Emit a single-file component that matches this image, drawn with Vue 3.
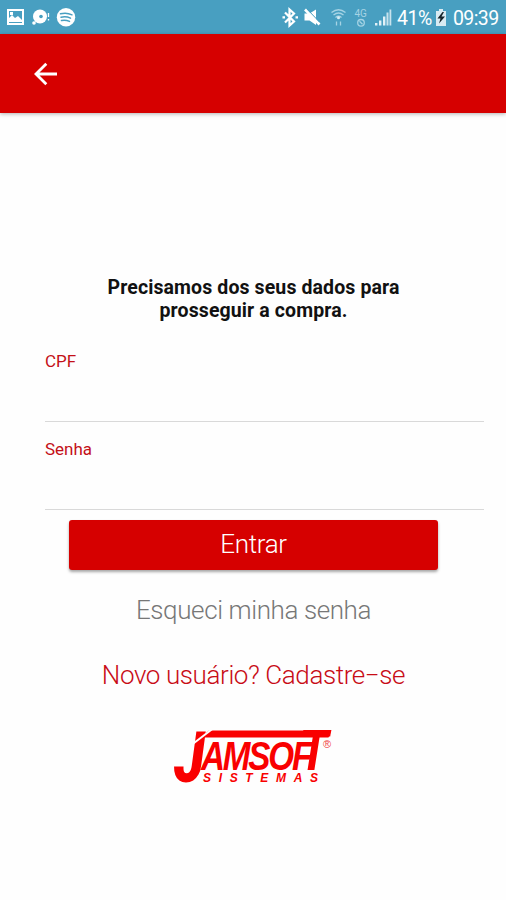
<script setup>
import { ref } from 'vue'

const cpf = ref('')
const senha = ref('')
</script>

<template>
  <div class="screen">
    <header class="status-bar">
      <svg class="status-icons" width="80" height="34" viewBox="0 0 80 34">
        <path fill="#fff" fill-rule="evenodd" d="M7 9h17v16H7zM9 11v12h13V11z" />
        <path fill="#fff" d="M9 22v-4l3-3 3 3 3-2 4 4v2zM10 12h3v3h-3z" />
        <circle cx="40" cy="16.5" r="7" fill="#fff" />
        <circle cx="34" cy="23" r="1.8" fill="#fff" />
        <circle cx="41" cy="16.5" r="1.8" fill="#489fc1" />
        <path d="M48.5 13v4M48.5 19v1.5" stroke="#fff" stroke-width="1.3" />
        <circle cx="66" cy="17.3" r="9.2" fill="#fff" />
        <path
          d="M60.5 13.8c4-1 8-.7 11.500 1M61 17.200c3.500-.8 6.500-.5 9.500 1M61.500 20.500c3-.7 5.500-.3 8 .9"
          fill="none"
          stroke="#489fc1"
          stroke-width="1.5"
          stroke-linecap="round"
        />
      </svg>

      <div class="status-right">
        <svg width="114" height="34" viewBox="280 0 114 34">
          <path
            d="M285 12.500l9 9-4.500 4V9.500l4.500 4-9 9"
            fill="none"
            stroke="#fff"
            stroke-width="2.200"
          />
          <path d="M282.500 16.200h2.500v2.400h-2.500zM295.500 16.200h2.500v2.400h-2.500z" fill="#fff" />
          <path d="M304.500 13.500h5l6.500-4v15.500l-6.500-4.500h-5z" fill="#fff" />
          <path d="M305 9.500l14.500 15" stroke="#fff" stroke-width="2.600" />
          <path d="M307 9l12.500 13" stroke="#489fc1" stroke-width="1" />
          <g fill="none" stroke="#a5d3e4" stroke-width="1.300">
            <path d="M331.500 12.500q7-5.500 14 0M333.500 15q5-4 10 0M335.500 17.500q3-2.500 6 0" />
            <path d="M336.500 21.500v4M340.500 21.500v4" />
            <circle cx="361" cy="22.800" r="3.300" />
            <path d="M359.500 21.300l3 3" />
          </g>
          <circle cx="338.500" cy="17.700" r="1.500" fill="#d7edf5" />
          <text class="network" x="354.500" y="17">4G</text>
          <path
            d="M375 23h2.400v2.500H375zM379 20.500h2.400v5H379zM383 16.500h2.400v9H383z"
            fill="#e1f1f7"
          />
          <path d="M386.500 12.500h2v13h-2zM389.500 9.500h1.800v16h-1.800z" fill="#c8e3ed" />
        </svg>
        <span class="battery">41%</span>
        <svg class="battery-icon" width="12" height="34" viewBox="0 0 12 34">
          <path d="M1 11h3V9h4v2h3v15H1z" fill="#d9ebf2" />
          <path d="M7.500 12L2.500 18.500H5.500L4 23.500L10 16.500H6.500L9 12z" fill="#17252b" />
        </svg>
        <span class="clock">09:39</span>
      </div>
    </header>

    <nav class="toolbar">
      <button class="back" aria-label="Voltar">
        <svg width="24" height="24" viewBox="0 0 24 24">
          <path
            d="M23 12H2.500M12.300 1.700L2 12l10.300 10.300"
            fill="none"
            stroke="#fff"
            stroke-width="2.800"
          />
        </svg>
      </button>
    </nav>

    <main class="content">
      <h1>Precisamos dos seus dados para<br />prosseguir a compra.</h1>

      <form @submit.prevent>
        <label class="field">
          <span>CPF</span>
          <input v-model="cpf" type="text" />
        </label>
        <label class="field">
          <span>Senha</span>
          <input v-model="senha" type="password" />
        </label>
        <button class="submit" type="submit">Entrar</button>
      </form>

      <a class="forgot">Esqueci minha senha</a>
      <a class="register">Novo usuário? Cadastre−se</a>

      <svg class="logo" width="166" height="62" viewBox="170 725 166 62">
        <g class="brand">
          <text class="initial" transform="translate(174 781.500) scale(0.79 1)">J</text>
          <path d="M209 730.500H331.500L328.500 737.500H200z" />
          <path d="M192 744.500L213 728.500" stroke="#fefefe" stroke-width="2" />
          <text class="letters" transform="translate(201 769.500) scale(0.83 1)">AMSOF</text>
          <text class="last" transform="translate(299 769.500) scale(0.83 1)">T</text>
        </g>
        <text class="tagline" x="203" y="781.500" textLength="115">SISTEMAS</text>
        <text class="mark" x="323" y="748">®</text>
      </svg>
    </main>
  </div>
</template>

<style>
body {
  margin: 0;
  background: #fefefe;
}
</style>

<style scoped>
.screen {
  width: 506px;
  height: 900px;
  overflow: hidden;
  background: #fefefe;
  font-family: Roboto, sans-serif;
}

.status-bar {
  display: flex;
  justify-content: space-between;
  height: 34px;
  background: #489fc1;
  color: #fff;
}

.status-right {
  display: flex;
  width: 226px;
}

.status-right span {
  line-height: 37px;
  font-size: 19.5px;
  white-space: nowrap;
}

.battery {
  width: 41px;
  margin-left: 3px;
  letter-spacing: -0.5px;
}

.battery-icon {
  margin-left: -3px;
}

.clock {
  margin-left: 6px;
  letter-spacing: -0.6px;
}

.network {
  fill: #a5d3e4;
  font-size: 10px;
}

.toolbar {
  display: flex;
  align-items: center;
  box-sizing: border-box;
  height: 79px;
  padding-left: 34px;
  background: #d60000;
  box-shadow: 0 1px 4px rgba(0, 0, 0, 0.3);
}

.back {
  display: flex;
  padding: 0;
  border: 0;
  background: none;
}

.content {
  display: flex;
  flex-direction: column;
  align-items: center;
  padding-top: 163px;
}

h1 {
  margin: 0;
  padding-left: 1px;
  color: #111;
  font-size: 19.5px;
  font-weight: 700;
  letter-spacing: 0.11px;
  line-height: 23px;
  text-align: center;
}

form {
  display: flex;
  flex-direction: column;
  width: 439px;
  margin: 29px 0 0 23px;
}

.field {
  display: flex;
  flex-direction: column;
  box-sizing: border-box;
  height: 71px;
  color: #c41018;
  font-size: 17px;
  line-height: 20px;
}

.field:first-child {
  margin-bottom: 17px;
}

.field input {
  flex: 1;
  min-height: 0;
  padding: 0;
  border: 0;
  border-bottom: 1px solid #d9d9d9;
  outline: none;
  background: transparent;
  font: inherit;
}

.submit {
  width: 369px;
  height: 50px;
  margin: 10px 0 0 24px;
  padding: 0 0 2px;
  border: 0;
  border-radius: 3px;
  background: #d60000;
  box-shadow: 0 2px 3px rgba(0, 0, 0, 0.35);
  color: #fff;
  font-family: inherit;
  font-size: 26px;
  font-weight: 300;
  letter-spacing: -0.35px;
}

.forgot,
.register {
  padding-left: 1px;
  font-size: 26px;
  font-weight: 300;
  letter-spacing: -0.4px;
  line-height: 30px;
}

.forgot {
  margin-top: 25px;
  color: #777;
}

.register {
  margin-top: 35px;
  color: #c80c16;
}

.logo {
  margin-top: 35px;
}

.brand {
  fill: #f90000;
  font-family: 'Liberation Sans', sans-serif;
  font-style: italic;
  font-weight: 700;
}

.initial {
  font-family: Roboto, sans-serif;
  font-size: 71px;
  font-weight: 900;
}

.letters {
  font-size: 40px;
  letter-spacing: -2.6px;
}

.last {
  font-size: 57px;
}

.tagline {
  fill: #f90000;
  font-family: 'Liberation Sans', sans-serif;
  font-size: 12px;
  font-style: italic;
  font-weight: 700;
}

.mark {
  fill: #f04040;
  font-family: 'Liberation Sans', sans-serif;
  font-size: 11px;
}
</style>
